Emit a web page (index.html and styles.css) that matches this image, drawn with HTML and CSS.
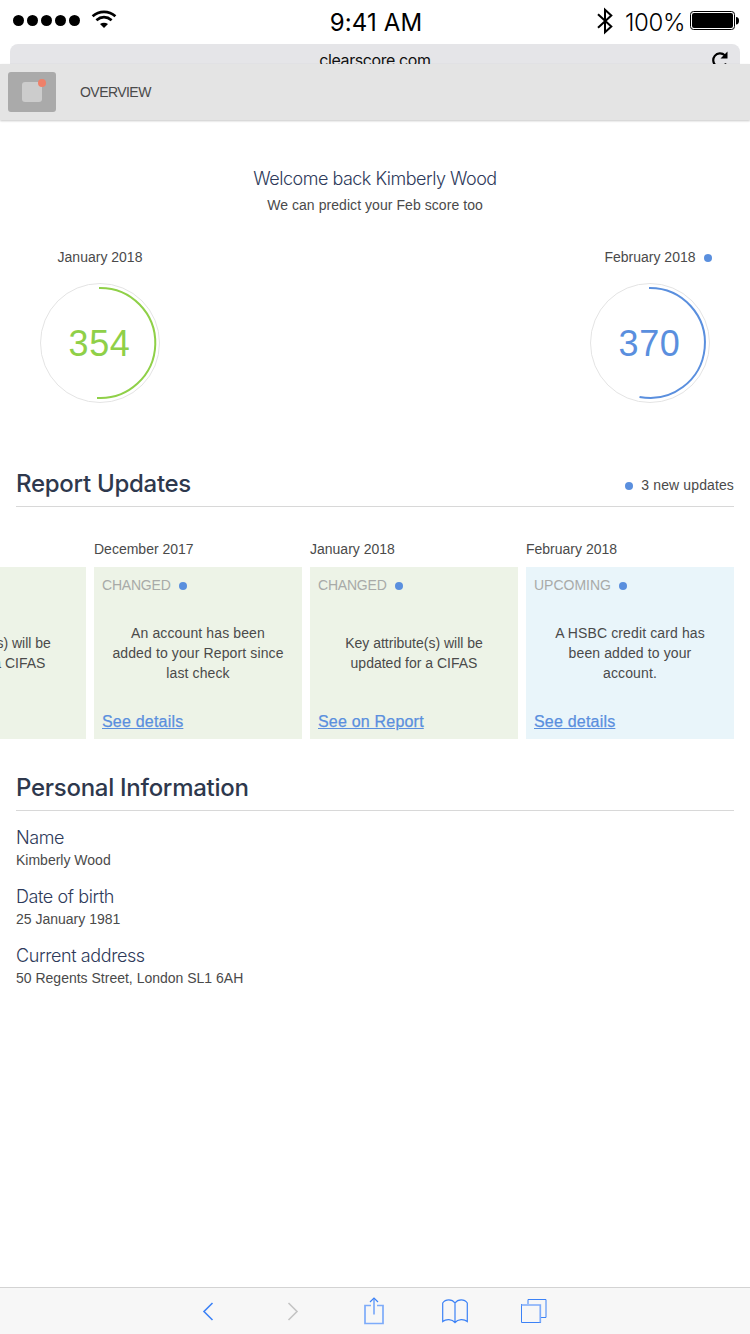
FILE: index.html
```html
<!DOCTYPE html>
<html lang="en">
<head>
<meta charset="utf-8">
<title>Overview</title>
<link rel="stylesheet" href="styles.css">
</head>
<body>
<div class="screen">
  <div class="status">
    <div class="status-left">
      <svg width="68" height="12" viewBox="0 0 68 12"><circle cx="5.5" cy="5.5" r="5.5"/><circle cx="19.5" cy="5.5" r="5.5"/><circle cx="33.5" cy="5.5" r="5.5"/><circle cx="47.5" cy="5.5" r="5.5"/><circle cx="61.5" cy="5.5" r="5.5"/></svg>
      <svg class="wifi" width="26" height="19" viewBox="0 0 26 19" fill="none" stroke="#000" stroke-width="2.7"><path d="M1.6 6.2Q6.500 1.800 13 1.800T24.4 6.2"/><path d="M5.4 10.3Q9 7.2 13 7.2T20.6 10.3"/><path d="M9 14Q13 11.6 17 14L13 18Z" fill="#000" stroke="none"/></svg>
    </div>
    <span class="clock">9:41 AM</span>
    <div class="status-right">
      <svg class="bluetooth" width="18" height="28" viewBox="0 0 18 28" fill="none" stroke="#000" stroke-width="2"><path d="M2 7.2L15.3 19.6 9 25.2V2.8L15.3 8.4 2 20.8"/></svg>
      <span class="percent">100%</span>
      <svg class="battery" width="49" height="20" viewBox="0 0 49 20"><rect x=".5" y=".5" width="44" height="18" rx="3" fill="none" stroke="#000"/><rect x="2" y="2" width="41" height="15" rx="2"/><path d="M46 6q3 0 3 3.7T46 13.400z"/></svg>
    </div>
  </div>
  <div class="urlbar">
    <span class="url">clearscore.com</span>
    <svg class="reload" width="18" height="20" viewBox="0 0 18 20" fill="none" stroke="#000" stroke-width="2.2"><path d="M15 12.500A6.800 6.800 0 1 1 13.800 4.300"/><path d="M16.500 .5V7.500H9.500z" fill="#000" stroke="none"/></svg>
  </div>
  <header class="header">
    <div class="menu"><div class="menu-icon"><i class="badge"></i></div></div>
    <span class="header-title">OVERVIEW</span>
  </header>

  <main>
    <section class="welcome">
      <h1 class="light greeting">Welcome back Kimberly Wood</h1>
      <p class="text predict">We can predict your Feb score too</p>
    </section>

    <section class="scores">
      <div class="score">
        <div class="score-label"><span class="text">January 2018</span></div>
        <div class="dial green">
          <svg class="ring" viewBox="0 0 120 120" fill="none"><circle cx="60" cy="60" r="59.500" stroke="#e4e4e4"/><path d="M59 5H60A55 55 0 1 1 57 114.900" stroke="currentColor" stroke-width="2"/></svg>
          <span class="value">354</span>
        </div>
      </div>
      <div class="score">
        <div class="score-label upcoming"><span class="text">February 2018</span><i class="dot"></i></div>
        <div class="dial blue">
          <svg class="ring" viewBox="0 0 120 120" fill="none"><circle cx="60" cy="60" r="59.500" stroke="#e4e4e4"/><path d="M59 5H60A55 55 0 1 1 49.500 114" stroke="currentColor" stroke-width="2"/></svg>
          <span class="value">370</span>
        </div>
      </div>
    </section>

    <section class="section-head">
      <h2>Report Updates</h2>
      <div class="news"><i class="dot"></i><span class="text wide">3 new updates</span></div>
    </section>

    <section class="cards">
      <article class="column">
        <div class="text date"></div>
        <div class="card"><div class="tag">&nbsp;</div><p class="text body">Key attribute(s) will be<br>updated for a CIFAS</p><div class="link-row"></div></div>
      </article>
      <article class="column">
        <div class="text date">December 2017</div>
        <div class="card"><div class="tag changed">CHANGED<i class="dot"></i></div><p class="text body wide">An account has been<br>added to your Report since<br>last check</p><div class="link-row"><a class="link">See details</a></div></div>
      </article>
      <article class="column">
        <div class="text date">January 2018</div>
        <div class="card"><div class="tag changed">CHANGED<i class="dot"></i></div><p class="text body">Key attribute(s) will be<br>updated for a CIFAS</p><div class="link-row"><a class="link">See on Report</a></div></div>
      </article>
      <article class="column">
        <div class="text date">February 2018</div>
        <div class="card future"><div class="tag">UPCOMING<i class="dot"></i></div><p class="text body wide">A HSBC credit card has<br>been added to your<br>account.</p><div class="link-row"><a class="link">See details</a></div></div>
      </article>
    </section>

    <section class="section-head personal">
      <h2>Personal Information</h2>
    </section>
    <dl class="info">
      <div class="field"><dt class="light">Name</dt><dd class="text">Kimberly Wood</dd></div>
      <div class="field"><dt class="light">Date of birth</dt><dd class="text">25 January 1981</dd></div>
      <div class="field"><dt class="light">Current address</dt><dd class="text">50 Regents Street, London SL1 6AH</dd></div>
    </dl>
  </main>

  <nav class="toolbar">
    <svg width="12" height="20" viewBox="0 0 12 20" fill="none" stroke="#3c82f6" stroke-width="1.600"><path d="M10.500 2L2 10.500l8.500 8.500"/></svg>
    <svg width="12" height="20" viewBox="0 0 12 20" fill="none" stroke="#c4c4c4" stroke-width="1.600"><path d="M1.500 2L10 10.500l-8.500 8.500"/></svg>
    <svg width="20" height="28" viewBox="0 0 20 28" fill="none" stroke="#3c82f6" stroke-width="1.200"><path d="M7 8.500H1V26.500H19V8.500H13" stroke="#7dabfa" stroke-width="1.700"/><path d="M10 17.500V2" stroke="#7dabfa" stroke-width="1.700"/><path d="M6 5l4-4 4 4"/></svg>
    <svg width="26" height="26" viewBox="0 0 26 26" fill="none" stroke="#3c82f6" stroke-width="1.200"><path d="M13 25V5C10 .8 3.500.8.700 5V23.500C4 20.800 10 20.800 13 24.500 16 20.800 22 20.800 25.300 23.500V5C22.500.8 16 .8 13 5"/></svg>
    <svg width="26" height="26" viewBox="0 0 26 26" fill="none" stroke="#3c82f6"><path d="M7 6V1.500H25V19.500H20"/><path d="M.5 6V24.500H20" /><path d="M.5 7H19.300V24.500" stroke="#7dabfa" stroke-width="1.700"/></svg>
  </nav>
</div>
</body>
</html>
```
FILE: styles.css
```css
* { box-sizing: border-box; margin: 0; padding: 0; }
body { background: #fff; font-family: "Liberation Sans", Arial, sans-serif; color: #4a4a4a; }
.screen { width: 750px; height: 1334px; display: flex; flex-direction: column; overflow: hidden; }
svg { display: block; flex: none; }

.status { height: 44px; display: grid; grid-template-columns: 1fr auto 1fr; font-family: Inter, sans-serif; font-size: 24px; line-height: 28px; color: #000; padding: 0 11px 0 13px; }
.status-left { display: flex; align-items: flex-start; gap: 10px; padding-top: 15px; }
.wifi { margin-top: -5px; }
.clock { padding-top: 9px; letter-spacing: .15px; }
.status-right { display: flex; justify-content: flex-end; padding-top: 6px; }
.bluetooth { margin-top: 1px; }
.percent { padding-top: 3px; margin: 0 5px 0 11px; letter-spacing: -.4px; font-weight: 300; }
.battery { margin-top: 5px; }

.urlbar { height: 20px; margin: 0 10px; border-radius: 8px 8px 0 0; background: #e5e5e8; overflow: hidden; display: grid; grid-template-columns: 1fr auto 1fr; color: #111; }
.url { grid-column: 2; font: 16px/20px Inter, sans-serif; letter-spacing: -.42px; padding-top: 6px; }
.reload { justify-self: end; margin: 7px 11px 0 0; }

.header { height: 56px; flex: none; background: #e4e4e4; display: flex; align-items: center; gap: 24px; padding-left: 8px; box-shadow: 0 1px 2px rgba(0,0,0,.22); }
.menu { width: 48px; height: 40px; border-radius: 3px; background: #aaa; display: grid; place-items: center; }
.menu-icon { width: 20px; height: 20px; border-radius: 3px; background: #ccc; position: relative; }
.badge { position: absolute; width: 8px; height: 8px; border-radius: 50%; background: #ef8069; right: -4px; top: -3px; }
.header-title { font-size: 14px; letter-spacing: -.55px; }

.text { font-size: 14px; line-height: 20px; color: #4a4a4a; white-space: nowrap; }
.wide { letter-spacing: .12px; }
.light { font: 300 18px/24px Inter, sans-serif; letter-spacing: -.4px; color: #2e3a5a; white-space: nowrap; }
.dot { display: block; width: 8px; height: 8px; border-radius: 50%; background: #5a8fde; flex: none; position: relative; top: 1px; }

main { flex: 1; }
.welcome { padding-top: 47px; text-align: center; }
.greeting { letter-spacing: -.5px; }
.predict { padding-top: 4px; letter-spacing: .06px; }
.scores { display: flex; justify-content: space-between; padding: 32px 32px 0 32px; }
.score { width: 136px; }
.score-label { height: 20px; display: flex; align-items: center; justify-content: center; gap: 8px; }
.score-label.upcoming { justify-content: flex-end; padding-right: 6.5px; }
.dial { width: 120px; height: 120px; margin: 16px auto 0; display: grid; place-items: center; }
.ring, .value { grid-area: 1 / 1; }
.ring { width: 120px; height: 120px; }
.value { font-size: 36px; line-height: 40px; letter-spacing: .6px; padding: 2px 1px 0 0; }
.green { color: #8fd048; }
.blue { color: #5a8fde; }

.section-head { margin: 64px 16px 0; height: 40px; border-bottom: 1px solid #d8d8d8; display: flex; justify-content: space-between; }
h2 { font: 500 24px/34px Inter, sans-serif; letter-spacing: -.28px; color: #2e384d; white-space: nowrap; }
.news { display: flex; align-items: center; gap: 8px; height: 20px; margin-top: 8px; }
.cards { display: flex; justify-content: flex-end; gap: 8px; padding: 32px 16px 0 0; overflow: hidden; }
.column { width: 208px; flex: none; }
.date { height: 20px; margin-bottom: 8px; }
.card { height: 172px; background: #edf3e7; display: grid; grid-template-rows: 20px 1fr 20px; padding: 8px; }
.future { background: #e9f5fa; }
.tag { font-size: 14px; line-height: 20px; color: #a8aaa8; display: flex; align-items: center; gap: 8px; }
.changed { letter-spacing: -.2px; }
.body { align-self: center; text-align: center; }
.link { font-size: 16px; line-height: 20px; letter-spacing: .2px; -webkit-text-stroke: .25px currentColor; color: #5a8fde; text-decoration: underline; }
.link-row { line-height: 20px; padding-top: 1px; }
.personal { margin-top: 32px; }
.info { padding: 15px 16px 0; }
.field { height: 59px; }

.toolbar { height: 47px; flex: none; background: #f7f7f7; border-top: 1px solid #d3d3d3; display: flex; align-items: center; padding-left: 202px; }
.toolbar svg:nth-child(2) { margin-left: 73px; }
.toolbar svg:nth-child(3) { margin-left: 65px; }
.toolbar svg:nth-child(4) { margin-left: 58px; }
.toolbar svg:nth-child(5) { margin-left: 53px; }
```
